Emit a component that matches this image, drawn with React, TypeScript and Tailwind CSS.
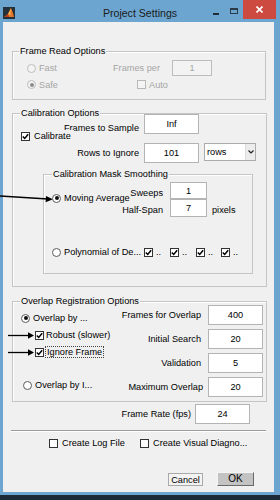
import type { ReactNode } from 'react';

const Radio = ({ on, dim }: { on?: boolean; dim?: boolean }) => (
  <span
    className={`w-[9px] h-[9px] shrink-0 rounded-full border flex items-center justify-center ${
      dim ? 'border-[#bdbdbd] bg-[#f4f4f4]' : 'border-[#5c5c5c] bg-white'
    }`}
  >
    {on && <span className={`w-[4px] h-[4px] rounded-full ${dim ? 'bg-[#8c8c8c]' : 'bg-[#111]'}`} />}
  </span>
);

const Check = ({ on, dim }: { on?: boolean; dim?: boolean }) => (
  <span
    className={`w-[9px] h-[9px] shrink-0 border flex items-center justify-center ${
      dim ? 'border-[#b8b8b8] bg-[#f4f4f4]' : 'border-[#333] bg-white'
    }`}
  >
    {on && (
      <svg width="7" height="7" viewBox="0 0 7 7">
        <path d="M0.8 3.4 L2.7 5.4 L6.2 1.2" stroke="#000" strokeWidth="1.5" fill="none" />
      </svg>
    )}
  </span>
);

const Field = ({ className, children }: { className: string; children: ReactNode }) => (
  <div className={`shrink-0 bg-white border border-[#b4b4b4] flex items-center justify-center ${className}`}>
    {children}
  </div>
);

const Panel = ({
  title,
  className,
  legend = 'left-[6px]',
  children,
}: {
  title: string;
  className: string;
  legend?: string;
  children: ReactNode;
}) => (
  <div className={`relative flex-none border border-[#c5c5c5] shadow-[inset_1px_1px_0_#fff] ${className}`}>
    <span className={`absolute -top-[7px] px-[1px] bg-[#f0f0f0] leading-[12px] whitespace-nowrap ${legend}`}>
      {title}
    </span>
    {children}
  </div>
);

export default function App() {
  return (
    <div className="relative w-[280px] h-[500px] overflow-hidden bg-[#6ca5cf] flex flex-col font-[Liberation_Sans,Arial,sans-serif] text-[9.2px] leading-[12px] text-black whitespace-nowrap">
      {/* title bar */}
      <div className="h-[22px] flex-none flex items-start">
        <div className="w-[70px] flex">
          <svg className="ml-[3px] mt-[7px]" width="12" height="12" viewBox="0 0 12 12">
            <rect width="12" height="12" fill="#24303a" />
            <path d="M1 10 L5 7 L8 1 L10 6 L11 10 Z" fill="#e3782c" />
            <path d="M5 7 L8 1 L7.5 8 Z" fill="#f5b04a" />
            <path d="M1 10 L5 7 L6 10 Z" fill="#b23a1c" />
          </svg>
        </div>
        <div className="flex-1 text-center text-[10.6px] leading-[14px] mt-[6px] text-[#1b1b1b]">Project Settings</div>
        <div className="w-[70px] flex items-start">
          <div className="ml-[3px] mt-[13px] w-[6px] h-[2px] bg-[#1f2d38]" />
          <div className="ml-[11px] mt-[8px] w-[8px] h-[6px] border border-[#2a3a46] border-t-2" />
          <div className="ml-[5px] w-[33px] h-[19px] bg-[#cc4a40] flex items-center justify-center">
            <svg width="7" height="7" viewBox="0 0 7 7">
              <path d="M0.5 0.5 L6.5 6.5 M6.5 0.5 L0.5 6.5" stroke="#fff" strokeWidth="1.6" />
            </svg>
          </div>
        </div>
      </div>

      {/* client area */}
      <div className="flex-none ml-[3px] w-[271px] h-[470px] bg-[#f0f0f0] flex flex-col">
        <Panel title="Frame Read Options" className="mt-[29px] ml-[9px] w-[254px] h-[49px]">
          <div className="mt-[8px] h-[16px] flex items-center pl-[14px] text-[#a5a5a5]">
            <div className="w-[86px] flex items-center">
              <Radio dim />
              <span className="ml-[3px]">Fast</span>
            </div>
            <span className="w-[59px]">Frames per</span>
            <div className="w-[40px] h-[16px] border border-[#bdbdbd] bg-[#f3f3f3] flex items-center justify-center">1</div>
          </div>
          <div className="mt-[2px] h-[13px] flex items-center pl-[14px] text-[#a5a5a5]">
            <div className="w-[110px] flex items-center">
              <Radio on dim />
              <span className="ml-[3px]">Safe</span>
            </div>
            <Check dim />
            <span className="ml-[3px]">Auto</span>
          </div>
        </Panel>

        <Panel title="Calibration Options" className="mt-[13px] ml-[9px] w-[255px] h-[174px]" legend="left-[7px]">
          <div className="h-[20px] flex items-end">
            <div className="w-[126px] text-right">Frames to Sample</div>
            <Field className="ml-[5px] w-[55px] h-[20px]">Inf</Field>
          </div>
          <div className="relative z-10 -mt-[4px] h-[12px] flex items-center pl-[8px]">
            <Check on />
            <span className="ml-[4px] pr-[3px] bg-[#f0f0f0]">Calibrate</span>
          </div>
          <div className="mt-[1px] h-[20px] flex items-center">
            <div className="w-[126px] text-right">Rows to Ignore</div>
            <Field className="ml-[5px] w-[55px] h-[20px]">101</Field>
            <div className="ml-[5px] self-start w-[52px] h-[18px] bg-white border border-[#acacac] flex items-center justify-between pl-[2px]">
              <span>rows</span>
              <div className="w-[10px] h-[16px] bg-[#ececec] border-l border-[#dcdcdc] flex items-center justify-center">
                <svg width="6" height="4" viewBox="0 0 6 4">
                  <path d="M0.5 0.5 L3 3 L5.5 0.5" stroke="#222" strokeWidth="1.2" fill="none" />
                </svg>
              </div>
            </div>
          </div>

          <Panel title="Calibration Mask Smoothing" className="mt-[11px] ml-[30px] w-[210px] h-[100px]" legend="left-[8px]">
            <div className="mt-[7px] h-[17px] flex items-end">
              <div className="w-[119px] text-right">Sweeps</div>
              <Field className="ml-[7px] w-[37px] h-[17px]">1</Field>
            </div>
            <div className="h-[18px] flex">
              <div className="w-[119px] flex flex-col">
                <div className="relative z-10 -mt-[7px] h-[12px] flex items-center pl-[8px]">
                  <Radio on />
                  <span className="ml-[3px]">Moving Average</span>
                </div>
                <div className="text-right">Half-Span</div>
              </div>
              <Field className="ml-[7px] w-[37px] h-[18px]">7</Field>
              <span className="ml-[5px] mt-[5px]">pixels</span>
            </div>
            <div className="mt-[29px] h-[12px] flex items-center pl-[8px]">
              <Radio />
              <span className="ml-[3px] w-[80px]">Polynomial of De...</span>
              <div className="w-[26px] flex items-center">
                <Check on />
                <span className="ml-[3px]">..</span>
              </div>
              <div className="w-[26px] flex items-center">
                <Check on />
                <span className="ml-[3px]">..</span>
              </div>
              <div className="w-[25px] flex items-center">
                <Check on />
                <span className="ml-[3px]">..</span>
              </div>
              <div className="flex items-center">
                <Check on />
                <span className="ml-[3px]">..</span>
              </div>
            </div>
          </Panel>
        </Panel>

        <Panel title="Overlap Registration Options" className="mt-[14px] ml-[9px] w-[255px] h-[101px] flex" legend="left-[7px]">
          <div className="w-[100px] flex flex-col">
            <div className="mt-[10px] h-[12px] flex items-center pl-[8px]">
              <Radio on />
              <span className="ml-[3px]">Overlap by ...</span>
            </div>
            <div className="mt-[5px] h-[12px] flex items-center pl-[22px]">
              <Check on />
              <span className="ml-[2px]">Robust (slower)</span>
            </div>
            <div className="mt-[5px] h-[12px] flex items-center pl-[22px]">
              <Check on />
              <span className="ml-[1px] px-[1px] h-[12px] border border-dotted border-[#444] leading-[10px]">Ignore Frame</span>
            </div>
            <div className="mt-[21px] h-[12px] flex items-center pl-[10px]">
              <Radio />
              <span className="ml-[3px]">Overlap by I...</span>
            </div>
          </div>
          <div className="flex-1 flex flex-col items-end pr-[3px] pt-[3px] gap-[4px]">
            <div className="flex items-center">
              <span>Frames for Overlap</span>
              <Field className="ml-[7px] w-[55px] h-[20px]">400</Field>
            </div>
            <div className="flex items-center">
              <span>Initial Search</span>
              <Field className="ml-[7px] w-[55px] h-[20px]">20</Field>
            </div>
            <div className="flex items-center">
              <span>Validation</span>
              <Field className="ml-[7px] w-[55px] h-[20px]">5</Field>
            </div>
            <div className="flex items-center">
              <span>Maximum Overlap</span>
              <Field className="ml-[5px] w-[55px] h-[20px]">20</Field>
            </div>
          </div>
        </Panel>

        <div className="mt-[2px] h-[20px] flex justify-end items-center mr-[24px]">
          <span>Frame Rate (fps)</span>
          <Field className="ml-[4px] w-[55px] h-[20px]">24</Field>
        </div>

        <div className="mt-[6px] ml-[8px] w-[255px] h-[2px] border-t border-[#9c9c9c] border-b border-b-white" />

        <div className="mt-[5px] h-[12px] flex items-center ml-[46px]">
          <div className="w-[91px] flex items-center">
            <Check />
            <span className="ml-[4px]">Create Log File</span>
          </div>
          <Check />
          <span className="ml-[4px]">Create Visual Diagno...</span>
        </div>

        <div className="mt-[23px] flex items-start ml-[165px]">
          <div className="mt-[1px] w-[35px] h-[13px] border border-[#a9a9a9] bg-[#f3f3f3] flex items-center justify-center">
            Cancel
          </div>
          <div className="ml-[14px] w-[37px] h-[14px] bg-[#c3c3c3] border border-t-[#f4f4f4] border-l-[#f4f4f4] border-b-[#6a6a6a] border-r-[#6a6a6a] flex items-center justify-center text-[10px]">
            OK
          </div>
        </div>
      </div>

      <div className="flex-none h-[3px]" />
      <div className="flex-1 bg-[#1c2b37]" />

      {/* annotation arrows */}
      <svg className="absolute left-0 top-0 pointer-events-none" width="280" height="500" viewBox="0 0 280 500">
        <line x1="0" y1="196" x2="48" y2="199" stroke="#000" strokeWidth="1.3" />
        <polygon points="53,199.3 46,196 45.6,202.2" fill="#000" />
        <line x1="8" y1="335.5" x2="30" y2="335.5" stroke="#000" strokeWidth="1.3" />
        <polygon points="34,335.5 28,332.3 28,338.7" fill="#000" />
        <line x1="8" y1="352.5" x2="30" y2="352.5" stroke="#000" strokeWidth="1.3" />
        <polygon points="34,352.5 28,349.3 28,355.7" fill="#000" />
      </svg>
    </div>
  );
}
